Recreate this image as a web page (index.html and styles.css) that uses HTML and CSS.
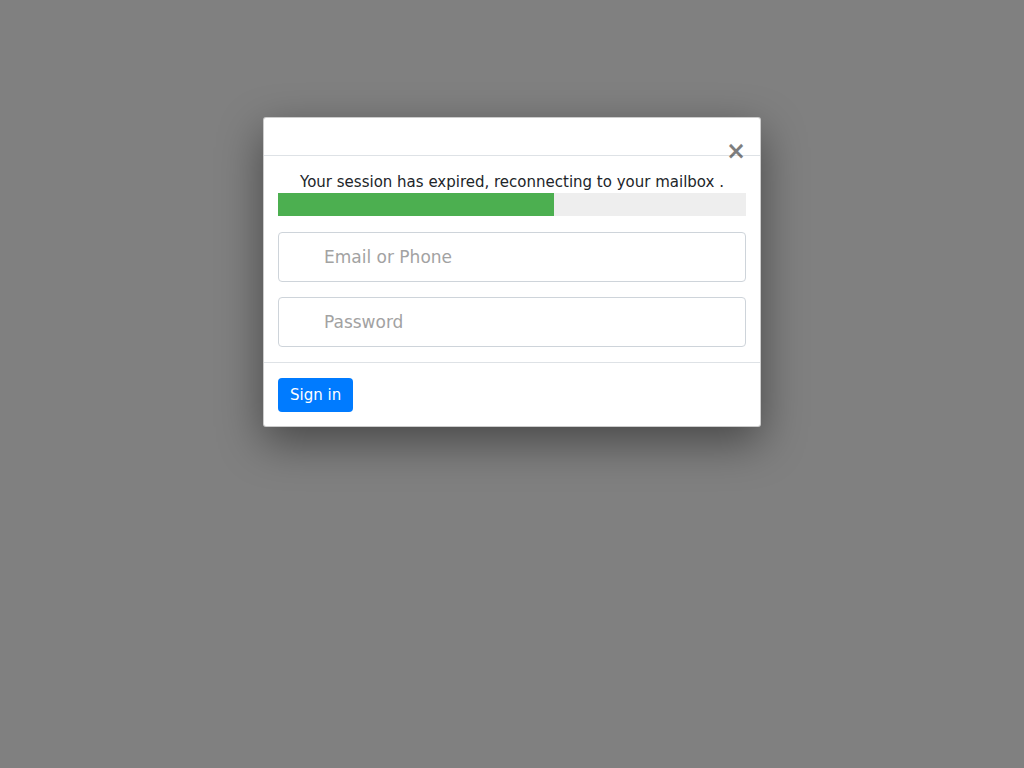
FILE: index.html
```html
<!DOCTYPE html>
<html lang="en">
<head>
<meta charset="utf-8">
<title>Sign in</title>
<link rel="stylesheet" href="styles.css">
</head>
<body>
<div class="backdrop">
  <div class="modal">
    <div class="modal-header">
      <button class="close" type="button" aria-label="Close">&times;</button>
    </div>
    <div class="modal-body">
      <p class="notice">Your session has expired, reconnecting to your mailbox .</p>
      <div class="progress"><div class="progress-bar" style="width:59%"></div></div>
      <div class="field"><input class="input" type="text" placeholder="Email or Phone"></div>
      <div class="field"><input class="input" type="password" placeholder="Password"></div>
    </div>
    <div class="modal-footer">
      <button class="btn" type="button">Sign in</button>
    </div>
  </div>
</div>
</body>
</html>
```
FILE: styles.css
```css
* { box-sizing: border-box; }
html, body { margin: 0; height: 100%; }
body {
  font-family: "DejaVu Sans", sans-serif;
  font-size: 15px;
  color: #212529;
  background: #808080;
}
.backdrop {
  min-height: 100%;
  background: #808080;
  padding-top: 117px;
}
.modal {
  width: 498px;
  margin: 0 auto;
  background: #fff;
  border: 1px solid rgba(0,0,0,.2);
  border-radius: 3px;
  box-shadow: 0 15px 45px rgba(0,0,0,.45);
}
.modal-header {
  height: 38px;
  border-bottom: 1px solid #dee2e6;
  display: flex;
  justify-content: flex-end;
  align-items: flex-end;
  padding-right: 14px;
}
.close {
  background: none;
  border: 0;
  padding: 0;
  font-family: "DejaVu Sans", sans-serif;
  font-size: 24px;
  font-weight: 700;
  line-height: 1;
  color: #000;
  opacity: .5;
  margin-bottom: -8px;
  cursor: pointer;
}
.modal-body {
  padding: 16px 14px 15px 14px;
}
.notice {
  margin: 0;
  text-align: center;
  line-height: 20px;
  height: 21px;
}
.progress {
  height: 23px;
  background: #eeeeee;
  display: flex;
}
.progress-bar {
  background: #4caf50;
  height: 100%;
}
.field { margin-top: 16px; }
.field + .field { margin-top: 15px; }
.input {
  display: block;
  width: 100%;
  height: 50px;
  border: 1px solid #ced4da;
  border-radius: 4px;
  padding: 0 12px 0 45px;
  font-family: "DejaVu Sans", sans-serif;
  font-size: 17px;
  color: #495057;
  background: #fff;
}
.input::placeholder { color: #a2a2a2; }
.modal-footer {
  border-top: 1px solid #dee2e6;
  padding: 15px 14px 14px;
  display: flex;
}
.btn {
  background: #007bff;
  color: #fff;
  border: 0;
  border-radius: 4px;
  height: 34px;
  padding: 0 12px;
  font-family: "DejaVu Sans", sans-serif;
  font-size: 15px;
  cursor: pointer;
}
```
